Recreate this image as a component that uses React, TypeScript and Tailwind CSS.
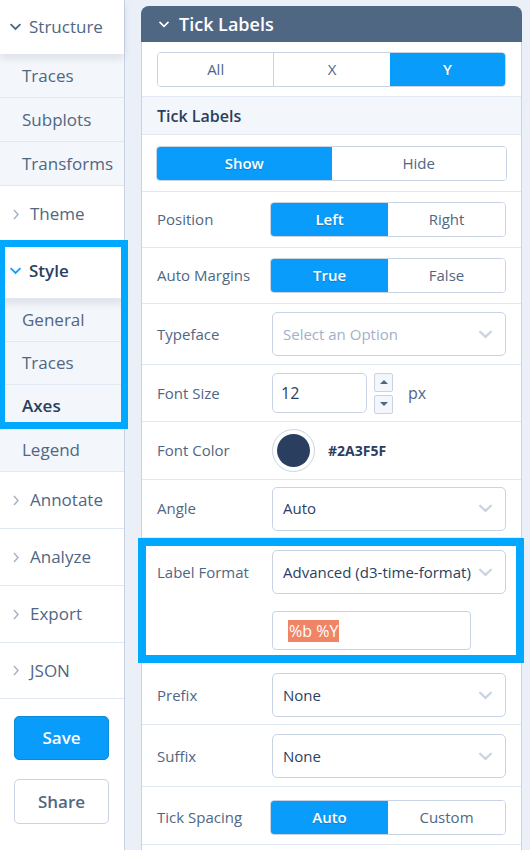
import React from "react";

const font = "font-['Open_Sans','Liberation_Sans',sans-serif]";

function ChevronDown({ className }: { className?: string }) {
  return (
    <svg viewBox="0 0 12 8" className={className} fill="none">
      <path d="M1.2 1.5l4.8 4.6 4.8-4.6" stroke="currentColor" strokeWidth="2" strokeLinecap="round" />
    </svg>
  );
}

function ChevronRight({ className }: { className?: string }) {
  return (
    <svg viewBox="0 0 6 11" className={className} fill="none">
      <path d="M1 1l4 4.5L1 10" stroke="currentColor" strokeWidth="1.4" />
    </svg>
  );
}

function NavTop({ label, open, active, h = "h-[57px]" }: { label: string; open?: boolean; active?: boolean; h?: string }) {
  return (
    <div
      className={`flex ${h} items-center gap-[8px] border-b border-[#dfe8f3] bg-white pl-[10px] ${
        open ? "relative z-[1] shadow-[0_4px_8px_rgba(42,63,95,0.12)]" : ""
      }`}
    >
      {open ? (
        <ChevronDown className={`h-[8px] w-[11px] ${active ? "text-[#119dff]" : "text-[#506784]"}`} />
      ) : (
        <span className="flex w-[12px] justify-center">
          <ChevronRight className="h-[11px] w-[6px] text-[#a2b1c6]" />
        </span>
      )}
      <span className={`text-[17px] ${active ? "font-semibold text-[#2a3f5f]" : "text-[#506784]"}`}>{label}</span>
    </div>
  );
}

function NavSub({ label, active, h = "h-[43px]" }: { label: string; active?: boolean; h?: string }) {
  return (
    <div className={`flex ${h} items-center border-b border-[#dfe8f3] bg-[#f3f6fa] pl-[22px]`}>
      <span className={`text-[17px] ${active ? "font-semibold text-[#2a3f5f]" : "text-[#506784]"}`}>{label}</span>
    </div>
  );
}

function Segmented({ options, active, className }: { options: string[]; active: number; className?: string }) {
  return (
    <div className={`flex h-[35px] overflow-hidden rounded-[4px] border border-[#c8d4e3] ${className ?? ""}`}>
      {options.map((o, i) => (
        <div
          key={o}
          className={`flex flex-1 items-center justify-center text-[15px] ${
            i === active
              ? "bg-[#0a9cfa] font-semibold text-white [text-shadow:0_1px_1px_rgba(0,0,0,0.2)]"
              : "bg-white text-[#506784]"
          } ${i > 0 && i !== active && i - 1 !== active ? "border-l border-[#c8d4e3]" : ""}`}
        >
          {o}
        </div>
      ))}
    </div>
  );
}

function Dropdown({ value, placeholder }: { value?: string; placeholder?: string }) {
  return (
    <div className="flex h-[44px] w-[234px] items-center justify-between rounded-[5px] border border-[#c8d4e3] bg-white pl-[10px] pr-[12px]">
      <span className={`whitespace-nowrap text-[15px] ${value ? "text-[#2a3f5f]" : "text-[#a2b1c6]"}`}>
        {value ?? placeholder}
      </span>
      <ChevronDown className="h-[9px] w-[15px] shrink-0 text-[#c8d4e3]" />
    </div>
  );
}

function Row({ label, children, h, extra = "" }: { label: string; children: React.ReactNode; h: string; extra?: string }) {
  return (
    <div className={`flex items-center border-b border-[#dfe8f3] pl-[15px] pr-[15px] ${h} ${extra}`}>
      <div className="w-[115px] text-[15px] text-[#506784]">{label}</div>
      <div className="flex flex-1 items-center">{children}</div>
    </div>
  );
}

export default function App() {
  return (
    <div className={`${font} flex h-[850px] w-[530px] overflow-hidden bg-[#ebf0f8]`}>
      {/* sidebar */}
      <aside className="relative flex w-[125px] shrink-0 flex-col border-r border-[#c8d4e3] bg-[#f3f6fa]">
        <div className="relative z-[1] flex h-[54px] items-center gap-[8px] bg-white pl-[10px] shadow-[0_4px_8px_rgba(42,63,95,0.12)]">
          <ChevronDown className="h-[8px] w-[11px] text-[#506784]" />
          <span className="text-[17px] text-[#506784]">Structure</span>
        </div>
        <NavSub label="Traces" h="h-[44px]" />
        <NavSub label="Subplots" h="h-[44px]" />
        <NavSub label="Transforms" h="h-[44px]" />
        <NavTop label="Theme" />

        <div className="relative">
          <NavTop label="Style" open active h="h-[56px]" />
          <NavSub label="General" />
          <NavSub label="Traces" />
          <NavSub label="Axes" active />
          <div className="pointer-events-none absolute -left-[2px] -right-[4px] -top-[3px] -bottom-[1px] z-10 border-[7px] border-[#00a8ff]" />
        </div>

        <NavSub label="Legend" h="h-[44px]" />
        <NavTop label="Annotate" />
        <NavTop label="Analyze" />
        <NavTop label="Export" />
        <NavTop label="JSON" h="h-[56px]" />

        <div className="flex flex-1 flex-col bg-white px-[14px] pt-[17px]">
          <div className="flex h-[44px] w-[95px] items-center justify-center rounded-[5px] border border-[#0b8ad8] bg-[#0a9cfa] text-[17px] font-semibold text-white">
            Save
          </div>
          <div className="mt-[19px] flex h-[45px] w-[95px] items-center justify-center rounded-[5px] border border-[#c8d4e3] bg-white text-[17px] font-semibold text-[#506784]">
            Share
          </div>
        </div>
      </aside>

      {/* main */}
      <main className="flex-1 pl-[16px] pr-[9px] pt-[6px]">
        <div className="rounded-t-[8px] border-x border-[#c8d4e3] bg-white">
          <div className="-mx-px flex h-[36px] items-center gap-[10px] rounded-t-[8px] bg-[#506784] pl-[18px]">
            <ChevronDown className="h-[7px] w-[10px] text-white" />
            <span className="text-[18px] font-semibold text-white">Tick Labels</span>
          </div>

          <div className="flex h-[55px] items-center border-b border-[#dfe8f3] px-[15px]">
            <Segmented options={["All", "X", "Y"]} active={2} className="w-full" />
          </div>

          <div className="flex h-[38px] items-center border-b border-[#dfe8f3] bg-[#f3f6fa] pl-[15px]">
            <span className="text-[16px] font-semibold text-[#2a3f5f]">Tick Labels</span>
          </div>

          <div className="flex h-[57px] items-center border-b border-[#dfe8f3] px-[14px]">
            <Segmented options={["Show", "Hide"]} active={0} className="w-full" />
          </div>

          <Row label="Position" h="h-[56px]">
            <Segmented options={["Left", "Right"]} active={0} className="-ml-[2px] w-[236px]" />
          </Row>
          <Row label="Auto Margins" h="h-[56px]">
            <Segmented options={["True", "False"]} active={0} className="-ml-[2px] w-[236px]" />
          </Row>
          <Row label="Typeface" h="h-[61px]">
            <Dropdown placeholder="Select an Option" />
          </Row>
          <Row label="Font Size" h="h-[57px]">
            <div className="flex h-[40px] w-[95px] items-center rounded-[5px] border border-[#c8d4e3] pl-[8px] text-[16px] text-[#2a3f5f]">
              12
            </div>
            <div className="ml-[7px] flex flex-col gap-[3px]">
              <div className="flex h-[19px] w-[19px] items-center justify-center rounded-[2px] border border-[#c8d4e3] bg-[#f3f6fa]">
                <span className="h-0 w-0 border-x-[4px] border-b-[4px] border-x-transparent border-b-[#506784]" />
              </div>
              <div className="flex h-[19px] w-[19px] items-center justify-center rounded-[2px] border border-[#c8d4e3] bg-[#f3f6fa]">
                <span className="h-0 w-0 border-x-[4px] border-t-[4px] border-x-transparent border-t-[#506784]" />
              </div>
            </div>
            <span className="ml-[15px] text-[16px] text-[#506784]">px</span>
          </Row>
          <Row label="Font Color" h="h-[58px]">
            <div className="flex h-[43px] w-[43px] items-center justify-center rounded-full border border-[#c8d4e3] bg-white">
              <div className="h-[33px] w-[33px] rounded-full bg-[#2a3f5f]" />
            </div>
            <span className="ml-[13px] text-[14px] font-bold text-[#2a3f5f]">#2A3F5F</span>
          </Row>
          <Row label="Angle" h="h-[58px]">
            <Dropdown value="Auto" />
          </Row>

          {/* label format, highlighted */}
          <div className="relative border-b border-[#dfe8f3] pb-[9px] pl-[15px] pr-[15px] pt-[12px]">
            <div className="flex">
              <div className="w-[115px] pt-[11px] text-[15px] text-[#506784]">Label Format</div>
              <div className="flex flex-1 flex-col gap-[17px]">
                <Dropdown value="Advanced (d3-time-format)" />
                <div className="flex h-[39px] w-[199px] items-center rounded-[4px] border border-[#c8d4e3] pl-[15px]">
                  <span className="bg-[#ef8566] px-[1px] text-[16px] leading-[22px] text-white">%b %Y</span>
                </div>
              </div>
            </div>
            <div className="pointer-events-none absolute -left-[4px] -right-[3px] top-0 -bottom-[4px] z-10 border-[8px] border-[#00a8ff]" />
          </div>

          <Row label="Prefix" h="h-[65px]" extra="pt-[6px]">
            <Dropdown value="None" />
          </Row>
          <Row label="Suffix" h="h-[62px]" extra="pt-[1px]">
            <Dropdown value="None" />
          </Row>
          <Row label="Tick Spacing" h="h-[58px]" extra="pt-[3px]">
            <Segmented options={["Auto", "Custom"]} active={0} className="-ml-[2px] w-[236px]" />
          </Row>
          <div className="h-[10px]" />
        </div>
      </main>
    </div>
  );
}
